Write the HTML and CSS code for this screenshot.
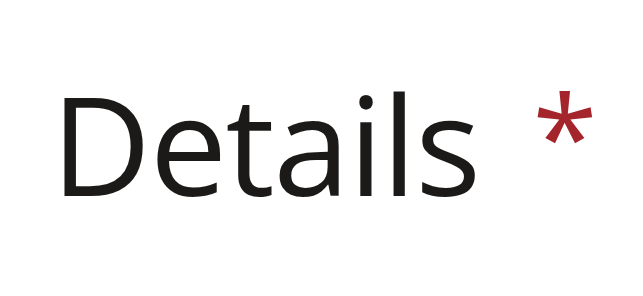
FILE: index.html
```html
<!DOCTYPE html>
<html>
<head>
<meta charset="utf-8">
<link rel="stylesheet" href="styles.css">
</head>
<body>
<div class="page">
  <label class="field-label">Details<span class="required">*</span></label>
</div>
</body>
</html>
```
FILE: styles.css
```css
html, body {
  margin: 0;
  padding: 0;
  background: #ffffff;
}
.page {
  width: 643px;
  height: 296px;
  box-sizing: border-box;
  padding: 72px 0 0 51px;
}
.field-label {
  display: block;
  font-family: "Open Sans", "Noto Sans", sans-serif;
  font-size: 138px;
  line-height: 140px;
  letter-spacing: -1.5px;
  color: #1b1a19;
  font-weight: 400;
  white-space: nowrap;
}
.required {
  display: inline-block;
  color: #a4262c;
  font-size: 118px;
  letter-spacing: 0;
  padding-left: 53px;
  vertical-align: 16px;
  line-height: 1;
}
```
